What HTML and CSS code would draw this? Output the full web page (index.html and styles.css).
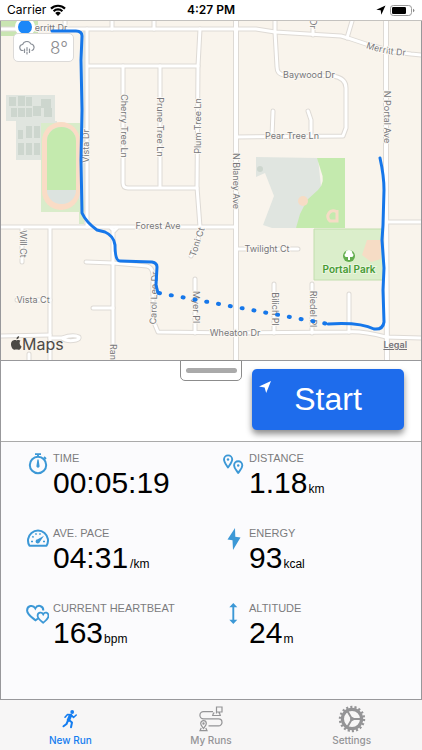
FILE: index.html
```html
<!DOCTYPE html>
<html lang="en">
<head>
<meta charset="utf-8">
<meta name="viewport" content="width=device-width, initial-scale=1">
<title>New Run</title>
<link rel="stylesheet" href="styles.css">
</head>
<body>
<header class="status">
  <div class="status-side">
    <span>Carrier</span>
    <svg width="16" height="12" viewBox="0 0 16 12" aria-hidden="true">
      <path d="M1 4.6a10 10 0 0 1 14 0M3.6 7.2a6.3 6.3 0 0 1 8.8 0" fill="none" stroke="#000" stroke-width="2.2"/>
      <path d="M8 12 5.2 9.1a4 4 0 0 1 5.6 0z"/>
    </svg>
  </div>
  <span class="status-time">4:27 PM</span>
  <div class="status-side status-right">
    <svg width="10" height="10" viewBox="0 0 10 10" aria-hidden="true"><path d="M9.5.4.3 4.7l4.4.6.6 4.4z"/></svg>
    <svg width="25" height="11" viewBox="0 0 25 11" aria-hidden="true">
      <rect x=".5" y=".5" width="21" height="10" rx="2.8" fill="none" stroke="#999"/>
      <rect x="2" y="2" width="14" height="7" rx="1.2"/>
      <path d="M23 3.7v3.6q1.4-.5 1.4-1.8T23 3.7z" fill="#888"/>
    </svg>
  </div>
</header>

<main class="screen">
  <section class="map" aria-label="Route map">
    <svg class="map-canvas" viewBox="1 21 420 339">
      <defs>
        <g id="minor">
          <path d="M0 29H256L275 32L341 36L348 38L366 44L395 52L411 54L422 55"/>
          <path d="M65 21V29M112 21V29M154 21V29M87 29V227M87 66H198"/>
          <path d="M200 29L198 66L197 187L200 227"/>
          <path d="M123 66V183Q123 188 128 188H197M160 66V188"/>
          <path d="M275 21V32L277 67Q277 74 284 75L333 76Q346 78 346 88V128L343 136L236 137"/>
          <path d="M313 21V35M352 21L347 38M273 111L272 137M308 111L311 120V137"/>
          <path d="M0 227H236M50 227V360M22 227V262M113 231V360M110 227L114 231L118 227"/>
          <path d="M86 262L113 263L147 266Q152 267 153 274V320L158 332L236 333L348 332Q362 331 386 337L422 338"/>
          <path d="M93 308H113M17 300H50M0 336L50 335M29 354V360"/>
          <path d="M50 338H62Q67 342 76 340Q80 339 79 337Q73 334 62 338"/>
          <path d="M195 279V333M191 256L198 240L200 227M236 249H298"/>
          <path d="M274 284V333M312 284V333M349 294V332M387 222H422"/>
        </g>
        <g id="major"><path d="M236 21V360M386 21V200L387 360"/></g>
        <path id="merritt" d="M366 48Q385 55 410 56"/>
      </defs>

      <path fill="#c9e5b2" d="M0 21H38V36H0z"/>
      <path fill="#e0e5df" d="M6 95H55V121H57V160H16V121H6z"/>
      <path fill="#cdd6ce" d="M9 97h7v9H9zM18 96h7v10h-7zM26 97h6v9h-6zM11 108h6v9h-6zM18 108h7v9h-7zM26 108h6v9h-6zM33 106h8v10h-8zM41 99h10v9H41zM44 108h8v9h-8zM18 130h5v9h-5zM26 126h6v12h-6zM34 126h6v12h-6zM18 143h6v12h-6zM26 143h6v12h-6zM34 143h6v12h-6z"/>
      <path fill="#d9ecca" d="M41 123H80V212H41z"/>
      <path fill="#dce5e3" d="M83 31H86V222L79 222V190H83z"/>
      <path fill="#d9ecca" d="M79 200H84V224H79z"/>
      <rect x="42" y="122" width="38" height="88" rx="19" fill="#fadcc6"/>
      <rect x="47" y="127" width="29" height="77" rx="14" fill="#dce3df"/>
      <path fill="#c4eaae" d="M47 190V141a14.500 14 0 0 1 29 0V190z"/>
      <path fill="#e0e5e0" d="M256 157L318 158L322 196L296 228H272L263 225L274 196L265 173L256 177z"/>
      <path fill="#c4eaae" d="M317 158H345V228H296L300 214L307 200L318 190Q326 182 321 171z"/>
      <circle cx="260" cy="169" r="3" fill="#cdd6ce"/>
      <circle cx="303" cy="201" r="5" fill="#f6dcc5"/>
      <path d="M337 210V221H330A5 5 0 1 1 337 212" fill="none" stroke="#f6dcc5" stroke-width="3"/>
      <path fill="#dbeecb" stroke="#c2deae" d="M314 229H384V280H314z"/>
      <path fill="#f6dcc5" d="M367 240h14v19l-10 3-9-7z"/>

      <g class="road-case"><use href="#minor"/></g>
      <g class="road-case road-case-major"><use href="#major"/></g>
      <g class="road-fill"><use href="#minor"/></g>
      <g class="road-fill road-fill-major"><use href="#major"/></g>

      <g class="road-label">
        <text x="51" y="31">erritt Dr</text>
        <text class="along"><textPath href="#merritt">Merritt Dr</textPath></text>
        <text x="309" y="78">Baywood Dr</text>
        <text x="292" y="139">Pear Tree Ln</text>
        <text x="158" y="229">Forest Ave</text>
        <text x="267" y="252">Twilight Ct</text>
        <text x="33" y="303">Vista Ct</text>
        <text x="235" y="336">Wheaton Dr</text>
        <text transform="translate(121 126) rotate(90)">Cherry Tree Ln</text>
        <text transform="translate(157 127) rotate(90)">Prune Tree Ln</text>
        <text transform="translate(201 126) rotate(-90)">Plum Tree Ln</text>
        <text transform="translate(89 146) rotate(-90)">Vista Dr</text>
        <text transform="translate(233 181) rotate(90)">N Blaney Ave</text>
        <text transform="translate(384 117) rotate(90)">N Portal Ave</text>
        <text transform="translate(20 244) rotate(90)">Will Ct</text>
        <text transform="translate(157 298) rotate(-88)">Carol Lee Dr</text>
        <text transform="translate(200 243) rotate(-72)">Toni Ct</text>
        <text transform="translate(193 307) rotate(90)">Myer Pl</text>
        <text transform="translate(272 309) rotate(90)">Bilich Pl</text>
        <text transform="translate(310 309) rotate(90)">Riedel Pl</text>
        <text transform="translate(110 352) rotate(90)">Ran</text>
        <text transform="translate(310 24) rotate(90)">Dr</text>
      </g>

      <circle cx="349" cy="256" r="6" fill="#62ad4e"/>
      <path fill="#fff" d="M348 260v-3h-1.500a2 2 0 0 1-.8-3.800 3.300 3.300 0 0 1 6.600 0 2 2 0 0 1-.8 3.800H350v3z"/>
      <text class="park-label" x="349" y="273">Portal Park</text>

      <g class="route">
        <path d="M52 31H76Q82 31 82 36L81 60L82 110L81 160L82 213Q86 222 97 230L105 232Q114 236 115 245Q115 261 120 261L152 262Q157 263 157 267L156 285L158 293"/>
        <path class="route-gap" d="M159 293L328 324"/>
        <path d="M380 158Q384 176 384 190L383 225L382 240L384 268L383 290L384 322Q383 330 374 329Q360 322 328 324"/>
      </g>

      <circle cx="25" cy="27" r="10" fill="#fff"/>
      <circle cx="25" cy="27" r="7" fill="#1b87f8"/>
      <g fill="#4c4a46">
        <path d="M20.500 340.800c-.8-.9-2.400-1.200-3.900-.4-1.500-.7-3.700-.3-4.800 1.200-1.500 2-.7 5.600 1 7.500.8.900 1.800.9 2.600.5.700-.3 1.500-.3 2.200 0 1.700.9 3.100-.5 4-3.200-1.900-1-2.700-4.200-1.100-5.600z"/>
        <path d="M16.500 339.300c-.1-1.700 1-3 2.600-3.300.2 1.800-1 3.200-2.600 3.300z"/>
      </g>
      <text class="map-brand" x="22" y="350">Maps</text>
    </svg>
    <div class="weather">
      <svg width="17" height="14" viewBox="0 0 17 14" aria-hidden="true">
        <path d="M4 9.500a3 3 0 0 1-.4-6A4.600 4.600 0 0 1 12 3a3.400 3.400 0 0 1 1 6.500M5.500 8v3.500M8 6.500v3M8 11v2M10.500 8v3.500" fill="none" stroke="#8c9199" stroke-width="1.200" stroke-linecap="round"/>
      </svg>
      <span>8°</span>
    </div>
    <a class="legal" href="#legal">Legal</a>
  </section>

  <section class="controls">
    <button class="handle" type="button" aria-label="Resize map"></button>
    <button class="start" type="button">
      <svg class="start-arrow" width="12" height="12" viewBox="0 0 12 12" aria-hidden="true"><path d="M12 0 0 5.500l5.600 1 1.600 5.500z" fill="#fff"/></svg>
      Start
    </button>
  </section>

  <section class="stats">
    <div class="stat">
      <svg class="stat-icon" viewBox="0 0 24 24" aria-hidden="true">
        <circle cx="13" cy="14" r="8.200" fill="none" stroke="#3c98d6" stroke-width="2"/>
        <path d="M10 3.200h6M13 3v3M19 6l2 2" fill="none" stroke="#3c98d6" stroke-width="1.800"/>
        <path d="M12.400 8.500h1.200l.9 6a1.600 1.600 0 1 1-3 0z" fill="#3c98d6"/>
      </svg>
      <div><div class="label">TIME</div><div class="value">00:05:19</div></div>
    </div>
    <div class="stat">
      <svg class="stat-icon" viewBox="0 0 24 24" aria-hidden="true">
        <path d="M7 16.500C5 13.500 3 11 3 8.500a4.100 4.100 0 0 1 8.200 0C11.200 11 9 13.500 7 16.500zM17.200 22c-2-3-4.100-5-4.100-7.600a4.100 4.100 0 0 1 8.200 0c0 2.600-2.100 4.600-4.100 7.600z" fill="none" stroke="#3c98d6" stroke-width="1.900" stroke-linejoin="round"/>
        <circle cx="7" cy="8.500" r="1.200" fill="#3c98d6"/><circle cx="17.200" cy="14.500" r="1.200" fill="#3c98d6"/>
      </svg>
      <div><div class="label">DISTANCE</div><div class="value">1.18<small>km</small></div></div>
    </div>
    <div class="stat">
      <svg class="stat-icon" viewBox="0 0 24 24" aria-hidden="true">
        <path d="M4.500 19.800A10 10 0 1 1 21.500 19.800z" fill="none" stroke="#3c98d6" stroke-width="2" stroke-linejoin="round"/>
        <path d="M6 15.500h2M7.300 10.300l1.300 1M10.700 7.300l.6 1.500M15.300 7.300l-.6 1.500M18 15.500h2" stroke="#3c98d6" stroke-width="1.500"/>
        <path d="M19 9.800 14.900 15.800a2.200 2.200 0 1 1-2.200-2.600z" fill="#3c98d6"/>
      </svg>
      <div><div class="label">AVE. PACE</div><div class="value">04:31<small class="per">/km</small></div></div>
    </div>
    <div class="stat">
      <svg class="stat-icon" viewBox="0 0 24 24" aria-hidden="true"><path d="M14 2 6.500 13.500l5 .8L12 24l7.500-12.500-5.200-.8z" fill="#3c98d6"/></svg>
      <div><div class="label">ENERGY</div><div class="value">93<small>kcal</small></div></div>
    </div>
    <div class="stat">
      <svg class="stat-icon" viewBox="0 0 24 24" aria-hidden="true">
        <path d="M13 17.500 10.500 19.300C6.500 16 2.300 13.500 2.100 9.600 2.100 4.500 8.100 3.300 10.300 7.400c2.200-4.100 8-3 8 2" fill="none" stroke="#3c98d6" stroke-width="2"/>
        <path d="M18.200 21.700c-2.800-2.200-5.600-4-5.600-6.900 0-3.600 4.200-4.300 5.600-1.500 1.400-2.800 5.300-2.100 5.300 1.500 0 2.900-2.500 4.700-5.300 6.900z" fill="#fbfbfd" stroke="#3c98d6" stroke-width="1.800"/>
      </svg>
      <div><div class="label">CURRENT HEARTBEAT</div><div class="value">163<small>bpm</small></div></div>
    </div>
    <div class="stat">
      <svg class="stat-icon" viewBox="0 0 24 24" aria-hidden="true"><path d="M12.300 5v15" stroke="#3c98d6" stroke-width="1.900"/><path d="M12.300 2 16.300 6.300h-8zM12.300 23l4-4.300h-8z" fill="#3c98d6"/></svg>
      <div><div class="label">ALTITUDE</div><div class="value">24<small>m</small></div></div>
    </div>
  </section>
</main>

<nav class="tabs">
  <a class="tab tab-active" href="#new-run">
    <svg width="26" height="28" viewBox="0 0 26 28" aria-hidden="true">
      <circle cx="15.200" cy="7" r="1.900" fill="currentColor"/>
      <path d="M8 12.200 10.500 9.500l3.700.2 2.300 2.800 2.700-2.500" fill="none" stroke="currentColor" stroke-width="1.600" stroke-linecap="round" stroke-linejoin="round"/>
      <path d="M13.500 10.500 11.500 15" stroke="currentColor" stroke-width="3.400" stroke-linecap="round"/>
      <path d="M12 15l3 2.500-1 4.700M11 15.500 9.500 19 6.500 21.300" fill="none" stroke="currentColor" stroke-width="2" stroke-linecap="round" stroke-linejoin="round"/>
    </svg>
    New Run
  </a>
  <a class="tab" href="#my-runs">
    <svg width="26" height="28" viewBox="0 0 26 28" fill="none" stroke="currentColor" stroke-width="1.200" aria-hidden="true">
      <path d="M15 6.700H5.500a3.600 3.600 0 0 0 0 7.200H20.500a3.500 3.500 0 0 1 0 7H10.500"/>
      <path d="M18.500 8.500V2H24v5h-5.500M16.500 8h-1l-.8 2.500h7.600L21.500 8h-1"/>
      <path d="M5.500 23.500c-1.300-2-2.800-3.200-2.800-5a2.800 2.800 0 0 1 5.600 0c0 1.800-1.500 3-2.800 5zM3.200 23l-1.200 2.700h7L7.800 23"/>
      <circle cx="5.500" cy="18.500" r=".6"/>
    </svg>
    My Runs
  </a>
  <a class="tab" href="#settings">
    <svg width="28" height="28" viewBox="-14 -14 28 28" fill="none" stroke="currentColor" aria-hidden="true">
      <circle r="9.600" stroke-width="3.200"/>
      <circle r="12" stroke-width="2.400" stroke-dasharray="2.100 2.089"/>
      <path d="M0 0H9M0 0-4.500-7.800M0 0-4.500 7.800" stroke-width="1.900"/>
      <circle r="2" stroke="none" fill="currentColor"/>
    </svg>
    Settings
  </a>
</nav>
</body>
</html>
```

FILE: styles.css
```css
* {
  box-sizing: border-box;
}

body {
  display: flex;
  flex-direction: column;
  min-height: 100vh;
  margin: 0;
  background: #fff;
  color: #000;
  font-family: "Liberation Sans", Arial, sans-serif;
}

button {
  padding: 0;
  font: inherit;
  cursor: pointer;
}

.status {
  display: flex;
  align-items: center;
  height: 21px;
  padding: 0 7px;
  border-bottom: 1px solid #c4c2bf;
  font: 12px/20px Inter, sans-serif;
}

.status-side {
  display: flex;
  flex: 1;
  align-items: center;
  gap: 4px;
}

.status-right {
  justify-content: flex-end;
}

.status-time {
  font-weight: 600;
}

.screen {
  display: flex;
  flex: 1;
  flex-direction: column;
  border: 1px solid #98989b;
  border-width: 0 1px 1px;
}

.map {
  position: relative;
  border-bottom: 1px solid #98989b;
  background: #f9f4ec;
}

.map-canvas {
  display: block;
  width: 100%;
  height: auto;
}

.road-case,
.road-fill,
.route {
  fill: none;
  stroke-linecap: round;
  stroke-linejoin: round;
}

.road-case {
  stroke: #dedad5;
  stroke-width: 5px;
}

.road-fill {
  stroke: #fff;
  stroke-width: 3px;
}

.road-case-major {
  stroke-width: 6px;
}

.road-fill-major {
  stroke-width: 4px;
}

.road-label {
  fill: #77777a;
  stroke: #fbf8f3;
  stroke-width: 2px;
  paint-order: stroke;
  font: 9px Inter, sans-serif;
  text-anchor: middle;
}

.road-label .along {
  text-anchor: start;
}

.park-label {
  fill: #469b35;
  stroke: #e9f5de;
  stroke-width: 2px;
  paint-order: stroke;
  font: 600 10px Inter, sans-serif;
  text-anchor: middle;
}

.route {
  stroke: #1677ea;
  stroke-width: 3px;
}

.route-gap {
  stroke-width: 4px;
  stroke-dasharray: 1 11;
}

.map-brand {
  fill: #4c4a46;
  font: 16px Inter, sans-serif;
}

.weather {
  position: absolute;
  top: 12px;
  left: 12px;
  display: flex;
  align-items: center;
  justify-content: space-between;
  width: 61px;
  height: 29px;
  padding: 0 5px;
  border: 1px solid #dcdad8;
  border-radius: 5px;
  background: #fff;
  color: #8e8e91;
  font: 300 17px Inter, sans-serif;
}

.legal {
  position: absolute;
  right: 14px;
  bottom: 8px;
  color: #77757a;
  font: 600 9px/14px Inter, sans-serif;
}

.controls {
  position: relative;
  display: flex;
  justify-content: flex-end;
  padding: 8px 17px 11px;
  border-bottom: 1px solid #aaa;
}

.handle {
  position: absolute;
  top: -1px;
  left: 50%;
  display: flex;
  align-items: center;
  justify-content: center;
  width: 62px;
  height: 21px;
  border: 1px solid #8c8c8c;
  border-radius: 0 0 5px 5px;
  background: #fff;
  transform: translateX(-50%);
}

.handle::before {
  width: 51px;
  height: 5px;
  border-radius: 3px;
  background: #aaa;
  content: "";
}

.start {
  position: relative;
  width: 152px;
  height: 61px;
  border: 0;
  border-radius: 5px;
  background: #1e6cec;
  box-shadow: 0 4px 6px rgb(0 0 0 / 45%);
  color: #fff;
  font-size: 32px;
}

.start-arrow {
  position: absolute;
  top: 12px;
  left: 7px;
}

.stats {
  display: grid;
  flex: 1;
  grid-template-columns: 1fr 1fr;
  align-content: start;
  gap: 25px 0;
  padding: 9px 4px 24px 24px;
  background: #fbfbfd;
}

.stat {
  display: flex;
  gap: 4px;
}

.stat-icon {
  flex: none;
  width: 24px;
  height: 24px;
}

.label {
  color: #7b7b7d;
  font-size: 11px;
  line-height: 14px;
}

.value {
  font-size: 30px;
  line-height: 36px;
}

.value small {
  margin-left: 1px;
  font-size: 12px;
  line-height: 1;
}

.value .per {
  margin-left: 2px;
}

.tabs {
  display: grid;
  grid-template-columns: repeat(3, 1fr);
  background: #f7f6f6;
}

.tab {
  display: flex;
  flex-direction: column;
  align-items: center;
  padding: 5px 0 2px;
  color: #949496;
  font: 500 10px/15px Inter, sans-serif;
  text-decoration: none;
}

.tab-active {
  color: #147df0;
}
```
